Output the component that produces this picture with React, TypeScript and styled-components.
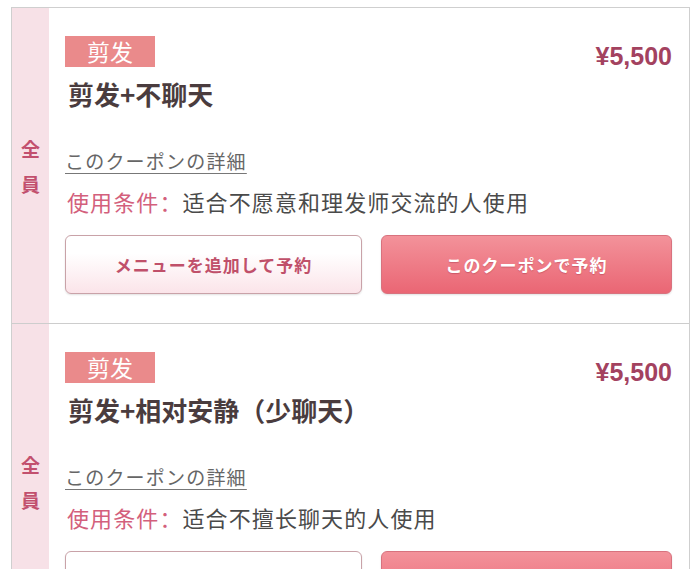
import { createGlobalStyle, styled } from "styled-components";

const GlobalStyle = createGlobalStyle`
  html, body {
    margin: 0;
    padding: 0;
    background: #fff;
  }
  body {
    font-family: "Noto Sans CJK SC", "Noto Sans CJK JP", "Noto Sans", sans-serif;
    color: #444;
  }
`;

const Page = styled.div`
  padding: 7px 2px 0 11px;
  height: 569px;
  overflow: hidden;
  box-sizing: border-box;
`;

const List = styled.div`
  border: 1px solid #cfcfcf;
  border-bottom: none;
`;

const Card = styled.div`
  display: grid;
  grid-template-columns: 37px 1fr;
  border-bottom: 1px solid #cdcdcd;
`;

const Side = styled.div`
  background: #f7e1e7;
  display: flex;
  flex-direction: column;
  align-items: center;
  justify-content: center;
  font-family: "Noto Sans CJK JP", sans-serif;
  font-weight: 700;
  font-size: 19px;
  line-height: 35px;
  color: #c2506e;
`;

const Main = styled.div`
  padding: 28px 17px 29px 16px;
  display: flex;
  flex-direction: column;
`;

const TopRow = styled.div`
  display: flex;
  justify-content: space-between;
  align-items: flex-start;
`;

const Tag = styled.span`
  background: #ea8a8b;
  color: #fff;
  font-size: 23px;
  line-height: 31px;
  padding: 0 22px;
`;

const Price = styled.span`
  font-family: "Liberation Sans", Arial, sans-serif;
  font-weight: 700;
  font-size: 25px;
  color: #a3425f;
  margin-top: 6px;
`;

const Title = styled.div`
  margin-top: 8px;
  padding-left: 3px;
  font-size: 26px;
  line-height: 30px;
  font-weight: 700;
  color: #4a3c3e;
`;

const DetailLink = styled.a`
  margin-top: 40px;
  align-self: flex-start;
  font-family: "Noto Sans CJK JP", sans-serif;
  font-size: 19px;
  letter-spacing: 1.2px;
  line-height: 24px;
  color: #666;
  text-decoration: underline;
  text-underline-offset: 4px;
  text-decoration-color: #777;
`;

const Condition = styled.div`
  margin-top: 15px;
  padding-left: 2px;
  font-size: 22px;
  letter-spacing: 1.1px;
  line-height: 26px;
  color: #4a4a4a;
`;

const Label = styled.span`
  color: #d3607c;
`;

const Buttons = styled.div`
  margin-top: 21px;
  display: grid;
  grid-template-columns: 297px 1fr;
  gap: 19px;
`;

const Button = styled.button<{ $primary?: boolean }>`
  height: 59px;
  border-radius: 6px;
  font-family: "Noto Sans CJK JP", sans-serif;
  font-weight: 700;
  font-size: 17px;
  letter-spacing: 1px;
  cursor: pointer;
  border: 1px solid ${(p) => (p.$primary ? "#d8727e" : "#c9a2a8")};
  color: ${(p) => (p.$primary ? "#fff" : "#c0506a")};
  background: ${(p) =>
    p.$primary
      ? "linear-gradient(#f3929a, #ea6674)"
      : "linear-gradient(#ffffff 30%, #fbe4e9)"};
  box-shadow: 0 1px 2px rgba(0, 0, 0, 0.12);
  text-shadow: ${(p) => (p.$primary ? "0 1px 1px rgba(150,40,60,0.35)" : "none")};
`;

const coupons = [
  { title: "剪发+不聊天", condition: "适合不愿意和理发师交流的人使用" },
  { title: "剪发+相对安静（少聊天）", condition: "适合不擅长聊天的人使用" },
];

const App = () => {
  return (
    <Page>
      <GlobalStyle />
      <List>
        {coupons.map((c, i) => (
          <Card key={`coupon-${i}`}>
            <Side>
              <span>全</span>
              <span>員</span>
            </Side>
            <Main>
              <TopRow>
                <Tag>剪发</Tag>
                <Price>¥5,500</Price>
              </TopRow>
              <Title>{c.title}</Title>
              <DetailLink href="#">このクーポンの詳細</DetailLink>
              <Condition>
                <Label>使用条件：</Label>
                {c.condition}
              </Condition>
              <Buttons>
                <Button>メニューを追加して予約</Button>
                <Button $primary>このクーポンで予約</Button>
              </Buttons>
            </Main>
          </Card>
        ))}
      </List>
    </Page>
  );
};

export default App;
